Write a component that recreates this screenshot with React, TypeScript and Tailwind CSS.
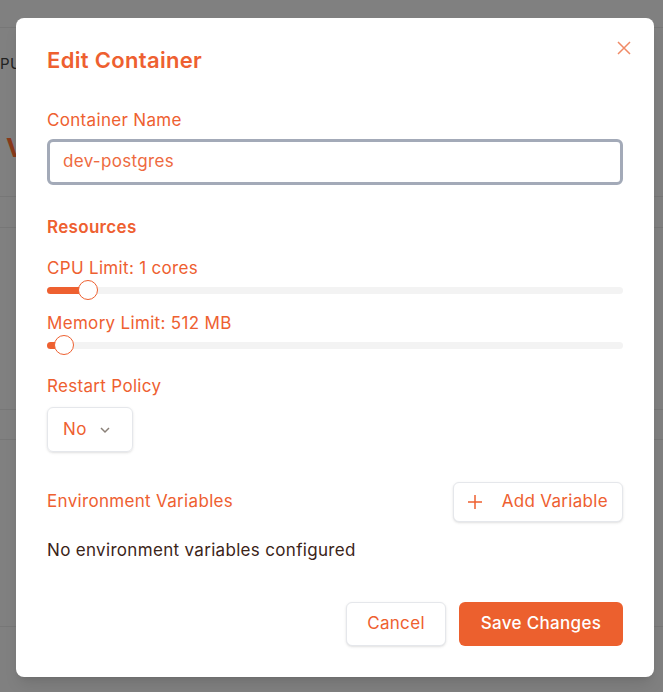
import React from "react";

const O = "text-[#ee6030]";

function Slider({ pct }: { pct: number }) {
  return (
    <div className="relative h-[20px] flex items-center">
      <div className="h-[7px] w-full rounded-full bg-[#f3f3f3]" />
      <div className="absolute left-0 h-[7px] rounded-l-full bg-[#ee6030]" style={{ width: `${pct}px` }} />
      <div className="absolute h-[20px] w-[20px] rounded-full bg-white border border-[#ee6030]" style={{ left: `${pct - 10}px` }} />
    </div>
  );
}

export default function App() {
  return (
    <div className="relative h-[692px] w-[663px] overflow-hidden bg-[#808080] tracking-[0.02em]" style={{ fontFamily: "Inter, 'Noto Sans', sans-serif" }}>
      <div className="flex flex-col">
        <div className="h-[28px] border-b border-[#777]" />
        <div className="h-[70px] pt-[25px] text-[15px] text-[#222]">PU</div>
        <div className="h-[99px] border-b border-[#777] pl-[6px] pt-[30px] text-[26px] font-bold text-[#8a3a1a]">V</div>
        <div className="h-[31px] border-b border-[#777]" />
        <div className="h-[182px] border-b border-[#777]" />
        <div className="h-[30px] border-b border-[#777]" />
        <div className="h-[187px] border-b border-[#777]" />
      </div>
      <div className="absolute left-[16px] top-[18px] w-[638px] h-[659px] rounded-[8px] bg-white shadow-lg px-[31px] pt-[27px]">
        <button className="absolute right-[23px] top-[23px] text-[#ee6030]">
          <svg width="14" height="14" viewBox="0 0 14 14" stroke="#f08a66" strokeWidth="1.5"><path d="M1 1L13 13M13 1L1 13" /></svg>
        </button>
        <h2 className={`${O} text-[22px] font-semibold leading-[30px]`}>Edit Container</h2>
        <div className={`${O} mt-[34px] text-[17px] leading-[22px]`}>Container Name</div>
        <div className="mt-[8px] h-[46px] rounded-[6px] border-[3px] border-[#a3aab8] bg-white flex items-center px-[13px]">
          <span className="text-[17px] text-[#ee6a40]">dev-postgres</span>
        </div>
        <div className={`${O} mt-[31px] text-[17px] font-semibold leading-[22px]`}>Resources</div>
        <div className={`${O} mt-[19px] text-[17px] leading-[22px]`}>CPU Limit: 1 cores</div>
        <div className="mt-[1px]"><Slider pct={41} /></div>
        <div className={`${O} mt-[12px] text-[17px] leading-[22px]`}>Memory Limit: 512 MB</div>
        <div className="mt-[1px]"><Slider pct={17} /></div>
        <div className={`${O} mt-[20px] text-[17px] leading-[22px]`}>Restart Policy</div>
        <div className="mt-[10px] flex h-[45px] w-[86px] items-center gap-[12px] rounded-[6px] border border-[#e5e7eb] px-[15px] shadow-sm">
          <span className={`${O} text-[17px]`}>No</span>
          <svg width="12" height="8" viewBox="0 0 12 8" fill="none" stroke="#8a8078" strokeWidth="1.5"><path d="M2 2l4 4 4-4" /></svg>
        </div>
        <div className="mt-[30px] flex items-center justify-between">
          <span className={`${O} text-[17px]`}>Environment Variables</span>
          <button className="flex h-[40px] items-center gap-[20px] rounded-[6px] border border-[#e5e7eb] bg-white px-[14px] shadow-sm">
            <svg width="14" height="14" viewBox="0 0 14 14" stroke="#ee6030" strokeWidth="1.5"><path d="M7 0v14M0 7h14" /></svg>
            <span className={`${O} text-[17px]`}>Add Variable</span>
          </button>
        </div>
        <div className="mt-[16px] text-[17px] text-[#3b2418]">No environment variables configured</div>
        <div className="mt-[38px] flex justify-end gap-[13px]">
          <button className={`${O} h-[44px] w-[100px] rounded-[6px] border border-[#e5e7eb] bg-white text-[17px] shadow-sm`}>Cancel</button>
          <button className="h-[44px] w-[164px] rounded-[6px] bg-[#ec602e] text-[17px] font-medium text-white">Save Changes</button>
        </div>
      </div>
    </div>
  );
}
